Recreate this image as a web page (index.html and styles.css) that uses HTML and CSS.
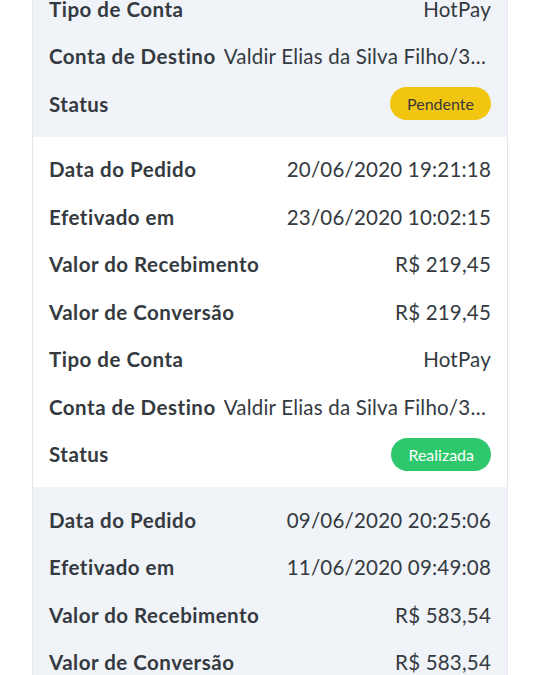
FILE: index.html
```html
<!DOCTYPE html>
<html lang="pt-BR">
  <head>
    <meta charset="UTF-8" />
    <meta name="viewport" content="width=device-width, initial-scale=1.0" />
    <title>Recebimentos</title>
    <link rel="stylesheet" href="styles.css">
  </head>
  <body>
    <main class="list">
      <section class="entry alt">
        <div class="row"><span class="label">Data do Pedido</span><span class="value">18/06/2020 14:10:32</span></div>
        <div class="row"><span class="label">Efetivado em</span><span class="value">-</span></div>
        <div class="row"><span class="label">Valor do Recebimento</span><span class="value">R$ 120,00</span></div>
        <div class="row"><span class="label">Valor de Conversão</span><span class="value">R$ 120,00</span></div>
        <div class="row"><span class="label">Tipo de Conta</span><span class="value">HotPay</span></div>
        <div class="row"><span class="label">Conta de Destino</span><span class="value">Valdir Elias da Silva Filho/3456-7</span></div>
        <div class="row"><span class="label">Status</span><span class="badge pending">Pendente</span></div>
      </section>

      <section class="entry">
        <div class="row"><span class="label">Data do Pedido</span><span class="value">20/06/2020 19:21:18</span></div>
        <div class="row"><span class="label">Efetivado em</span><span class="value">23/06/2020 10:02:15</span></div>
        <div class="row"><span class="label">Valor do Recebimento</span><span class="value">R$ 219,45</span></div>
        <div class="row"><span class="label">Valor de Conversão</span><span class="value">R$ 219,45</span></div>
        <div class="row"><span class="label">Tipo de Conta</span><span class="value">HotPay</span></div>
        <div class="row"><span class="label">Conta de Destino</span><span class="value">Valdir Elias da Silva Filho/3456-7</span></div>
        <div class="row"><span class="label">Status</span><span class="badge done">Realizada</span></div>
      </section>

      <section class="entry alt">
        <div class="row"><span class="label">Data do Pedido</span><span class="value">09/06/2020 20:25:06</span></div>
        <div class="row"><span class="label">Efetivado em</span><span class="value">11/06/2020 09:49:08</span></div>
        <div class="row"><span class="label">Valor do Recebimento</span><span class="value">R$ 583,54</span></div>
        <div class="row"><span class="label">Valor de Conversão</span><span class="value">R$ 583,54</span></div>
        <div class="row"><span class="label">Tipo de Conta</span><span class="value">HotPay</span></div>
        <div class="row"><span class="label">Conta de Destino</span><span class="value">Valdir Elias da Silva Filho/3456-7</span></div>
        <div class="row"><span class="label">Status</span><span class="badge done">Realizada</span></div>
      </section>
    </main>
  </body>
</html>
```

FILE: styles.css
```css
*,
*::before,
*::after {
  box-sizing: border-box;
}

body {
  font-family: Lato, 'Noto Sans', sans-serif;
  background: #fff;
  color: #343a40;
  margin: 0;
  overflow: hidden;
}

.list {
  margin: -214px 32px 0;
  border-left: 1px solid #e4e7eb;
  border-right: 1px solid #e4e7eb;
}

.entry {
  background: #fff;
  padding: 9px 16px;

  &.alt {
    background: #f0f3f8;
  }
}

.row {
  display: flex;
  align-items: center;
  justify-content: space-between;
  gap: 8px;
  height: 47.5px;
  font-size: 20.5px;

  .label {
    font-weight: 700;
    letter-spacing: 0.5px;
    white-space: nowrap;
  }

  .value {
    flex: 1;
    min-width: 0;
    text-align: right;
    letter-spacing: 0.2px;
    white-space: nowrap;
    overflow: hidden;
    text-overflow: ellipsis;
  }
}

.badge {
  display: inline-flex;
  align-items: center;
  justify-content: center;
  height: 33px;
  padding: 0 17px;
  border-radius: 17px;
  font-size: 16px;

  &.pending {
    background: #f2c511;
    color: #3a3a3a;
  }

  &.done {
    background: #2ec86c;
    color: #fff;
  }
}
```
